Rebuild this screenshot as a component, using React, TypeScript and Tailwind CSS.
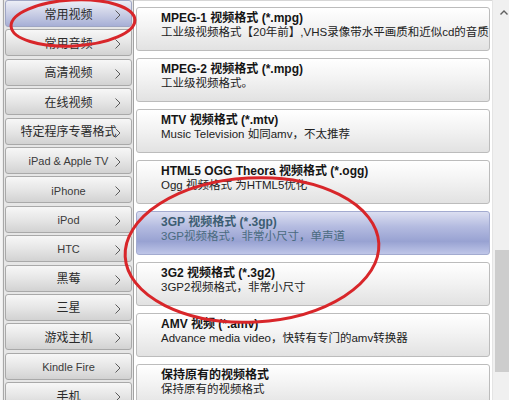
import React from "react";

const categories = [
  "常用视频",
  "常用音频",
  "高清视频",
  "在线视频",
  "特定程序专署格式",
  "iPad & Apple TV",
  "iPhone",
  "iPod",
  "HTC",
  "黑莓",
  "三星",
  "游戏主机",
  "Kindle Fire",
  "手机",
];

const formats = [
  { title: "MPEG-1 视频格式 (*.mpg)", desc: "工业级视频格式【20年前】,VHS录像带水平画质和近似cd的音质" },
  { title: "MPEG-2 视频格式 (*.mpg)", desc: "工业级视频格式。" },
  { title: "MTV 视频格式 (*.mtv)", desc: "Music Television 如同amv，不太推荐" },
  { title: "HTML5 OGG Theora 视频格式 (*.ogg)", desc: "Ogg 视频格式 为HTML5优化" },
  { title: "3GP 视频格式 (*.3gp)", desc: "3GP视频格式，非常小尺寸，单声道", active: true },
  { title: "3G2 视频格式 (*.3g2)", desc: "3GP2视频格式，非常小尺寸" },
  { title: "AMV 视频 (*.amv)", desc: "Advance media video，快转有专门的amv转换器" },
  { title: "保持原有的视频格式", desc: "保持原有的视频格式" },
];

function Chevron() {
  return (
    <svg width="6" height="10" viewBox="0 0 6 10" className="absolute right-[10px] top-[9px]">
      <polyline points="0.5,0.5 5,5 0.5,9.5" fill="none" stroke="#5a5a5a" strokeWidth="1" />
    </svg>
  );
}

export default function App() {
  return (
    <div className="relative w-[509px] h-[400px] overflow-hidden flex bg-white font-['Liberation_Sans','Noto_Sans_CJK_SC',sans-serif]">
      {/* category column */}
      <div className="flex w-[134px] shrink-0 bg-[#e6e6e6] border-r border-[#a3a3a3]">
        <div className="w-[4px] shrink-0 bg-[#ececec] border-l-2 border-r border-l-[#f4f4f4] border-r-[#a8a8a8]" />
        <div className="flex-1 flex flex-col gap-[2.4px] pl-[1px] pr-[1px]">
          {categories.map((c, i) => (
            <div
              key={c}
              className={`relative h-[27px] shrink-0 flex items-center justify-center rounded-[3px] border whitespace-nowrap ${
                /^[\x00-\x7f]+$/.test(c) ? "text-[11px] text-[#3a3a3a]" : "text-[12px] text-[#2a2a2a]"
              } ${
                i === 0
                  ? "border-[#9fa6c4] bg-[linear-gradient(to_bottom,#eceef6,#c7cce4_55%,#a7afd6)]"
                  : "border-[#a9a9a9] bg-[linear-gradient(to_bottom,#f7f7f7,#e6e6e6_50%,#d2d2d2)]"
              }`}
            >
              <span className="pt-[2px]">{c}</span>
              <Chevron />
            </div>
          ))}
        </div>
      </div>

      {/* format list */}
      <div className="flex-1 flex flex-col gap-[7px] pt-[6px] pl-[2px] pr-[2px] border-t border-[#d6d6d6]">
        {formats.map((f) => (
          <div
            key={f.title}
            className={`h-[44px] shrink-0 overflow-hidden rounded-[3px] border pl-[24px] pt-[3px] whitespace-nowrap ${
              f.active
                ? "border-[#a3abd0] bg-[linear-gradient(to_bottom,#dcdff1,#b4bbe0_35%,#98a2d2_70%,#bfc6e8)] text-[#3c5d72]"
                : "border-[#bcbcbc] bg-[linear-gradient(to_bottom,#ffffff,#f3f3f3_45%,#e2e2e2)] text-[#151515]"
            }`}
          >
            <div className="text-[12px] leading-[14px] font-bold">{f.title}</div>
            <div className={`text-[11.5px] leading-[14px] ${f.active ? "text-[#4a6b80]" : "text-[#222]"}`}>{f.desc}</div>
          </div>
        ))}
      </div>

      {/* scrollbar */}
      <div className="relative w-[23px] shrink-0 bg-[#f0f0f0] border-l border-[#e4e4e4]">
        <svg width="8" height="5" viewBox="0 0 8 5" className="absolute left-[7px] top-[10px]">
          <polyline points="0.5,4.5 4,1 7.5,4.5" fill="none" stroke="#606060" strokeWidth="1.4" />
        </svg>
        <div className="absolute left-[2px] top-[250px] w-[15px] h-[122px] bg-[#cdcdcd]" />
      </div>

      {/* red annotation marks */}
      <svg className="absolute inset-0 pointer-events-none" width="509" height="400" viewBox="0 0 509 400">
        <ellipse cx="73" cy="23" rx="62" ry="23" transform="rotate(-3 73 23)" fill="none" stroke="#d8262a" strokeWidth="3" />
        <ellipse cx="252" cy="250" rx="127" ry="72" transform="rotate(-3 252 250)" fill="none" stroke="#d8262a" strokeWidth="3" />
      </svg>
    </div>
  );
}
